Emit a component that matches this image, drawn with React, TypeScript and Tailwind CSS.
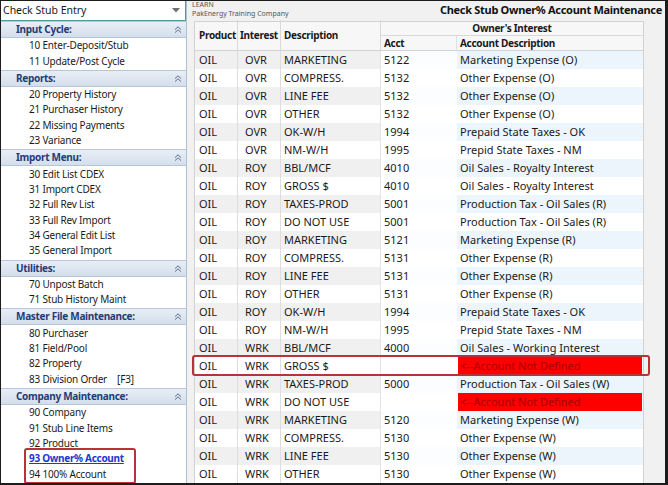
import React from 'react';

const sections: { title: string; items: string[] }[] = [
  { title: 'Input Cycle:', items: ['10 Enter-Deposit/Stub', '11 Update/Post Cycle'] },
  { title: 'Reports:', items: ['20 Property History', '21 Purchaser History', '22 Missing Payments', '23 Variance'] },
  {
    title: 'Import Menu:',
    items: ['30 Edit List CDEX', '31 Import CDEX', '32 Full Rev List', '33 Full Rev Import', '34 General Edit List', '35 General Import'],
  },
  { title: 'Utilities:', items: ['70 Unpost Batch', '71 Stub History Maint'] },
  { title: 'Master File Maintenance:', items: ['80 Purchaser', '81 Field/Pool', '82 Property', '83 Division Order'] },
  { title: 'Company Maintenance:', items: ['90 Company', '91 Stub Line Items', '92 Product', '93 Owner% Account', '94 100% Account'] },
];

type Row = [string, string, string, string, string];
const rows: Row[] = [
  ['OIL', 'OVR', 'MARKETING', '5122', 'Marketing Expense (O)'],
  ['OIL', 'OVR', 'COMPRESS.', '5132', 'Other Expense (O)'],
  ['OIL', 'OVR', 'LINE FEE', '5132', 'Other Expense (O)'],
  ['OIL', 'OVR', 'OTHER', '5132', 'Other Expense (O)'],
  ['OIL', 'OVR', 'OK-W/H', '1994', 'Prepaid State Taxes - OK'],
  ['OIL', 'OVR', 'NM-W/H', '1995', 'Prepid State Taxes - NM'],
  ['OIL', 'ROY', 'BBL/MCF', '4010', 'Oil Sales - Royalty Interest'],
  ['OIL', 'ROY', 'GROSS $', '4010', 'Oil Sales - Royalty Interest'],
  ['OIL', 'ROY', 'TAXES-PROD', '5001', 'Production Tax - Oil Sales (R)'],
  ['OIL', 'ROY', 'DO NOT USE', '5001', 'Production Tax - Oil Sales (R)'],
  ['OIL', 'ROY', 'MARKETING', '5121', 'Marketing Expense (R)'],
  ['OIL', 'ROY', 'COMPRESS.', '5131', 'Other Expense (R)'],
  ['OIL', 'ROY', 'LINE FEE', '5131', 'Other Expense (R)'],
  ['OIL', 'ROY', 'OTHER', '5131', 'Other Expense (R)'],
  ['OIL', 'ROY', 'OK-W/H', '1994', 'Prepaid State Taxes - OK'],
  ['OIL', 'ROY', 'NM-W/H', '1995', 'Prepid State Taxes - NM'],
  ['OIL', 'WRK', 'BBL/MCF', '4000', 'Oil Sales - Working Interest'],
  ['OIL', 'WRK', 'GROSS $', '', ''],
  ['OIL', 'WRK', 'TAXES-PROD', '5000', 'Production Tax - Oil Sales (W)'],
  ['OIL', 'WRK', 'DO NOT USE', '', ''],
  ['OIL', 'WRK', 'MARKETING', '5120', 'Marketing Expense (W)'],
  ['OIL', 'WRK', 'COMPRESS.', '5130', 'Other Expense (W)'],
  ['OIL', 'WRK', 'LINE FEE', '5130', 'Other Expense (W)'],
  ['OIL', 'WRK', 'OTHER', '5130', 'Other Expense (W)'],
];

function Chevrons() {
  return (
    <svg width="8" height="7" viewBox="0 0 8 7">
      <path d="M1 3.6 L4 0.8 L7 3.6 M1 6.6 L4 3.8 L7 6.6" fill="none" stroke="#5a6e8c" strokeWidth="1" />
    </svg>
  );
}

export default function App() {
  return (
    <div className="relative w-[668px] h-[485px] overflow-hidden bg-[#f1f1f1] border-t border-l border-r-[3px] border-b-2 border-[#1c1c1c] font-['Noto_Sans',sans-serif] flex">
      {/* Left navigation panel */}
      <div className="w-[186px] h-full shrink-0 flex flex-col bg-white border-r border-[#aebfd2] overflow-hidden">
        <div className="h-[20px] shrink-0 flex items-center justify-between pl-[2px] pr-[5px] border-b border-r border-[#4f9f96] bg-white">
          <span className="text-[10.5px] text-[#1a1a1a] whitespace-nowrap">Check Stub Entry</span>
          <svg width="8" height="5" viewBox="0 0 8 5">
            <path d="M0 0 L8 0 L4 4.5 Z" fill="#707070" />
          </svg>
        </div>
        {sections.map((s) => (
          <div key={s.title} className="shrink-0">
            <div className="h-[17px] flex items-center justify-between pl-[15px] pr-[4px] bg-linear-to-b from-[#e8eef6] to-[#d4dfec] border-t border-b border-[#b6c6d8]">
              <span className="text-[10px] font-bold tracking-[-0.3px] text-[#1f3b78] whitespace-nowrap">{s.title}</span>
              <Chevrons />
            </div>
            <div className="pb-[1px]">
              {s.items.map((it) =>
                it === '93 Owner% Account' ? (
                  <div key={it} className="h-[15.4px] flex items-center pl-[28px] whitespace-nowrap">
                    <span className="text-[10px] font-bold tracking-[-0.3px] text-[#2236d0] underline">{it}</span>
                  </div>
                ) : (
                  <div
                    key={it}
                    className="h-[15.4px] flex items-center pl-[28px] text-[10px] tracking-[-0.2px] text-[#1a1a1a] whitespace-nowrap"
                  >
                    {it}
                    {it === '83 Division Order' && <span className="ml-[10px]">[F3]</span>}
                  </div>
                )
              )}
            </div>
          </div>
        ))}
      </div>

      {/* Main area */}
      <div className="flex-1 min-w-0 flex flex-col">
        <div className="h-[20px] shrink-0 flex justify-between pl-[5px] pr-[3px] overflow-hidden">
          <div className="flex flex-col text-[7px] text-[#555] whitespace-nowrap">
            <span className="leading-[8px]">LEARN</span>
            <span className="leading-[10px]">PakEnergy Training Company</span>
          </div>
          <div className="text-[11px] font-bold tracking-[-0.3px] text-[#111] leading-[17px] whitespace-nowrap">
            Check Stub Owner% Account Maintenance
          </div>
        </div>

        <div className="ml-[7px] w-[450px] border-l border-r border-[#d2d2d2]">
          {/* header */}
          <div className="flex h-[30px] bg-[#f7f7f7] border-t border-b border-[#d2d2d2] text-[10px] font-bold tracking-[-0.3px] text-[#1a1a1a]">
            <div className="w-[43px] border-r border-[#d9d9d9] flex items-center pl-[4px] -mt-[2px]">Product</div>
            <div className="w-[43px] border-r border-[#d9d9d9] flex items-center pl-[2px] -mt-[2px]">Interest</div>
            <div className="w-[100px] border-r border-[#d9d9d9] flex items-center pl-[3px] -mt-[2px]">Description</div>
            <div className="flex-1 flex flex-col">
              <div className="h-[14px] border-b border-[#d9d9d9] flex items-center justify-center">Owner&apos;s Interest</div>
              <div className="flex-1 flex">
                <div className="w-[76px] border-r border-[#e0e0e0] flex items-center pl-[3px]">Acct</div>
                <div className="flex-1 flex items-center pl-[3px]">Account Description</div>
              </div>
            </div>
          </div>
          {/* rows */}
          {rows.map((r, i) => {
            const odd = i % 2 === 0;
            const missing = r[4] === '';
            return (
              <div key={i} className="flex h-[18px] text-[11px] text-[#1a1a1a] whitespace-nowrap">
                <div className={`w-[43px] border-r border-[#dedede] flex items-center pl-[4px] ${odd ? 'bg-[#f0f0f0]' : 'bg-white'}`}>
                  {r[0]}
                </div>
                <div className={`w-[43px] border-r border-[#dedede] flex items-center pl-[7px] ${odd ? 'bg-[#f0f0f0]' : 'bg-white'}`}>
                  {r[1]}
                </div>
                <div className={`w-[100px] border-r border-[#e4e4e4] flex items-center pl-[3px] ${odd ? 'bg-[#f0f0f0]' : 'bg-white'}`}>
                  {r[2]}
                </div>
                <div className={`w-[76px] flex items-center pl-[3px] ${odd ? 'bg-[#fbfdfe]' : 'bg-white'}`}>{r[3]}</div>
                <div className={`flex-1 flex ${odd ? 'bg-[#ebf5fb]' : 'bg-white'}`}>
                  {missing ? (
                    <div className="flex-1 ml-[1px] mr-[1px] bg-[#fe0000] flex items-center pl-[2px] text-[#a80000]">
                      &lt;--Account Not Defined
                    </div>
                  ) : (
                    <div className="flex-1 flex items-center pl-[3px]">{r[4]}</div>
                  )}
                </div>
              </div>
            );
          })}
        </div>
      </div>

      {/* annotation boxes */}
      <div className="absolute left-[191px] top-[354px] w-[458px] h-[21px] border-2 border-[#b8323b] rounded-[3px] pointer-events-none" />
      <div className="absolute left-[23px] top-[447px] w-[112px] h-[36px] border-2 border-[#b8323b] rounded-[3px] pointer-events-none" />
    </div>
  );
}
